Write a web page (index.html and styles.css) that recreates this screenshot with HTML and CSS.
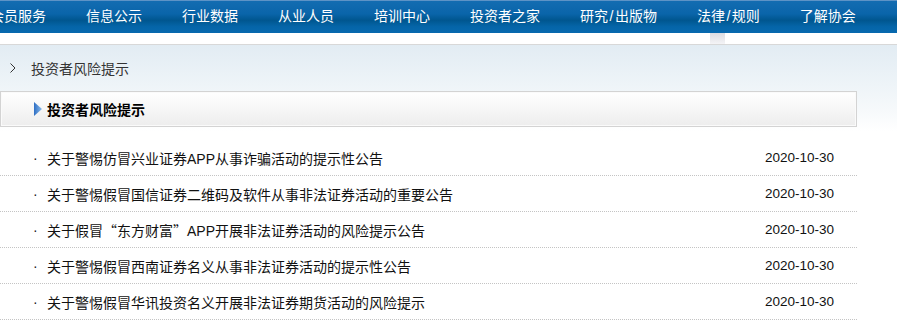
FILE: index.html
```html
<!DOCTYPE html>
<html lang="zh-CN">
  <head>
    <meta charset="UTF-8" />
    <meta name="viewport" content="width=device-width, initial-scale=1.0" />
    <title>投资者风险提示</title>
    <link rel="stylesheet" href="styles.css">
  </head>
  <body>
    <!-- thanh menu chính -->
    <div class="nav">
      <ul>
        <li>会员服务</li>
        <li>信息公示</li>
        <li>行业数据</li>
        <li>从业人员</li>
        <li>培训中心</li>
        <li>投资者之家</li>
        <li>研究<i>/</i>出版物</li>
        <li>法律<i>/</i>规则</li>
        <li>了解协会</li>
      </ul>
    </div>
    <div class="gap"><span class="handle"></span></div>
    <div class="main">
      <div class="crumb">
        <svg class="chev" width="6" height="10" viewBox="0 0 6 10"><polyline points="0.5,0.5 5,5 0.5,9.5" fill="none" stroke="#333" stroke-width="1"/></svg>
        <span>投资者风险提示</span>
      </div>
      <div class="box">
        <div class="boxTitle">
          <svg class="tri" width="8" height="14" viewBox="0 0 8 14">
            <defs>
              <linearGradient id="g" x1="0" y1="0" x2="1" y2="0">
                <stop offset="0" stop-color="#2f6fc4" />
                <stop offset="1" stop-color="#8bbcec" />
              </linearGradient>
            </defs>
            <polygon points="0,0 8,7 0,14" fill="url(#g)" />
          </svg>
          <b>投资者风险提示</b>
        </div>
      </div>
      <ul class="list">
        <li><span class="dot">·</span><a>关于警惕仿冒兴业证券APP从事诈骗活动的提示性公告</a><span class="date">2020-10-30</span></li>
        <li><span class="dot">·</span><a>关于警惕假冒国信证券二维码及软件从事非法证券活动的重要公告</a><span class="date">2020-10-30</span></li>
        <li><span class="dot">·</span><a>关于假冒<span class="q">“</span>东方财富<span class="q">”</span>APP开展非法证券活动的风险提示公告</a><span class="date">2020-10-30</span></li>
        <li><span class="dot">·</span><a>关于警惕假冒西南证券名义从事非法证券活动的提示性公告</a><span class="date">2020-10-30</span></li>
        <li><span class="dot">·</span><a>关于警惕假冒华讯投资名义开展非法证券期货活动的风险提示</a><span class="date">2020-10-30</span></li>
      </ul>
    </div>
  </body>
</html>
```

FILE: styles.css
```css
* {
  margin: 0;
  padding: 0;
}
body {
  font-family: "Liberation Sans", "Noto Sans CJK SC", sans-serif;
  font-size: 14px;
  color: #222;
  background: #fff;
  overflow: hidden;
}
ul {
  list-style: none;
}
/* menu */
.nav {
  height: 33px;
  border-top: 1px solid #5d93c6;
  box-sizing: border-box;
  background: linear-gradient(#136cb1 0%, #0a65aa 40%, #00568f 60%, #0565a8 80%, #0769af 100%);
}
.nav ul {
  display: flex;
  margin-left: -30px;
  white-space: nowrap;
}
.nav li {
  padding: 0 20px;
  line-height: 31px;
  color: #fff;
}
.nav i {
  font-style: normal;
  padding: 0 1.5px;
}
.gap {
  height: 11px;
  border-bottom: 1px solid #d8d8d8;
  display: flex;
}
.handle {
  margin-left: 710px;
  width: 15px;
  background: linear-gradient(#dcdce2, #f4f4f6);
}
.main {
  background: linear-gradient(#e2ecf3 0px, #eef4f8 40px, #f6f9fb 65px, #ffffff 86px);
}
.crumb {
  height: 46px;
  display: flex;
  align-items: center;
  padding-left: 10px;
  color: #333;
}
.chev {
  margin-right: 15px;
}
.box {
  width: 857px;
  height: 36px;
  box-sizing: border-box;
  border: 1px solid #d3d3d3;
  background: linear-gradient(#ffffff, #ededed);
  box-shadow: inset 0 0 0 1px #fafafa;
}
.boxTitle {
  display: flex;
  align-items: center;
  height: 34px;
  padding-left: 33px;
  color: #000;
}
.tri {
  margin-right: 5px;
}
.list {
  width: 857px;
  margin-top: 13px;
  background: #fff;
}
.list li {
  height: 35px;
  border-bottom: 1px dotted #c4c4c4;
  display: flex;
  align-items: center;
  padding-right: 23px;
}
.dot {
  width: 47px;
  padding-left: 33px;
  box-sizing: border-box;
}
.list a {
  flex: 1;
  color: #111;
}
.q {
  font-family: "Noto Sans CJK SC", sans-serif;
  display: inline-block;
  width: 14px;
  text-align: center;
}
.date {
  color: #111;
  font-size: 13.5px;
}
```
